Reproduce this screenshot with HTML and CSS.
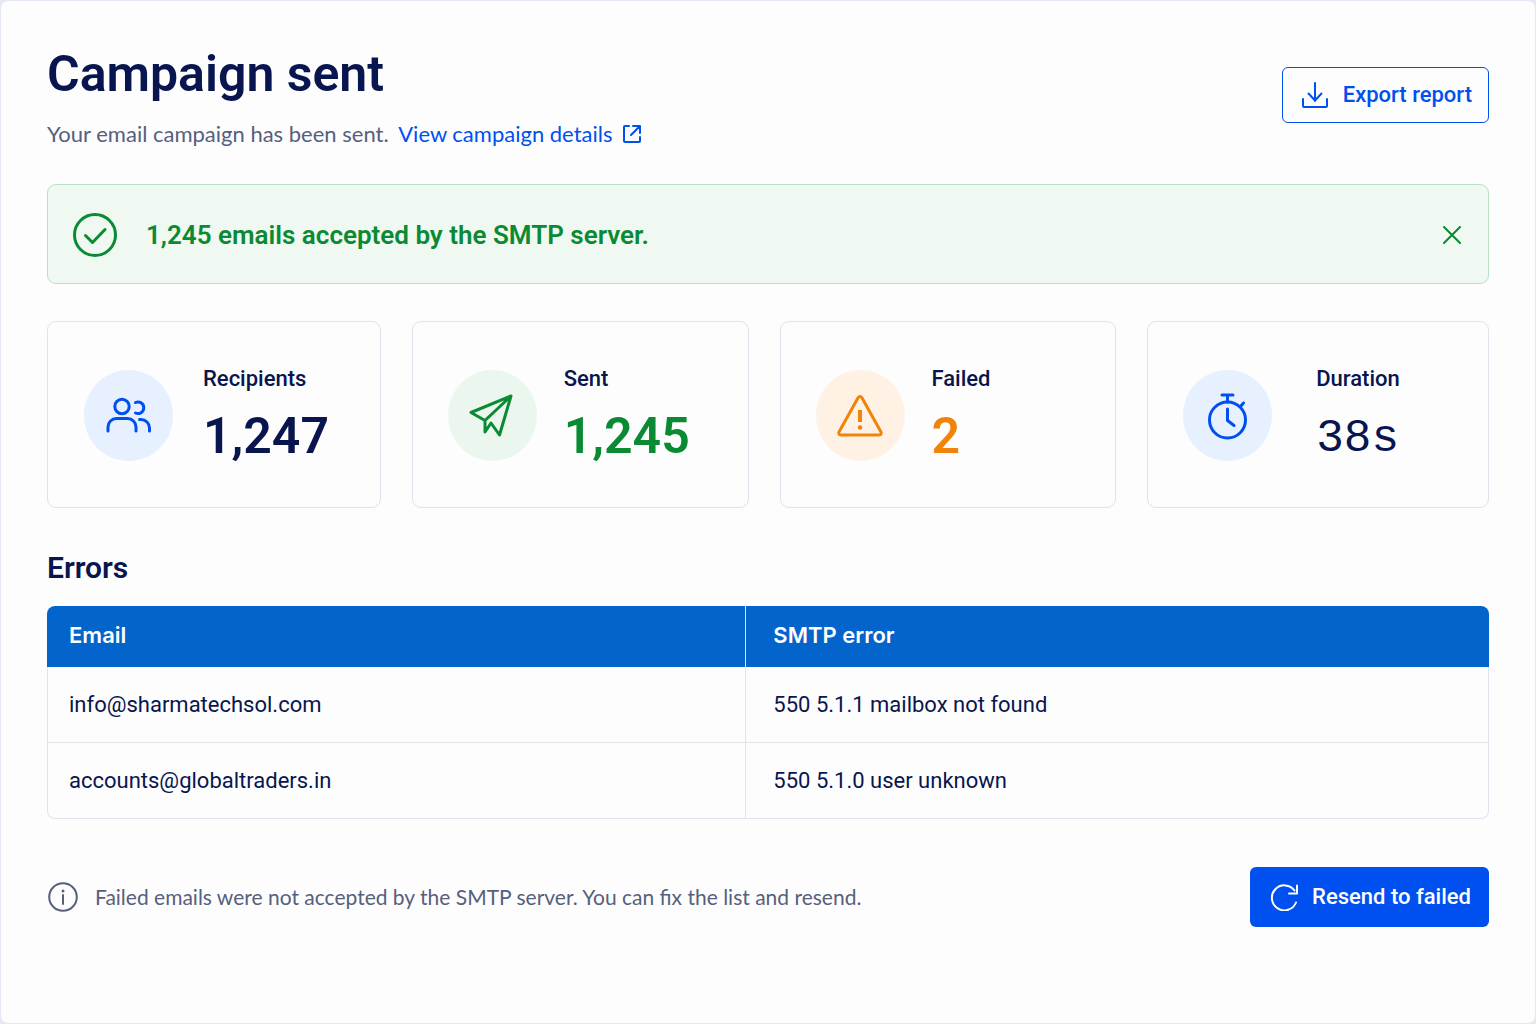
FILE: index.html
```html
<!DOCTYPE html>
<html lang="en">
<head>
<meta charset="utf-8">
<meta name="viewport" content="width=device-width, initial-scale=1">
<title>Campaign sent</title>
<link rel="stylesheet" href="styles.css">
</head>
<body>
<main class="page">
  <header class="header">
    <div>
      <h1 class="title">Campaign sent</h1>
      <p class="subtitle">Your email campaign has been sent.
        <a class="link" href="#details">View campaign details<svg class="link-icon" width="20" height="20" viewBox="0 0 20 20" aria-hidden="true"><path d="M7 2H3a1 1 0 0 0-1 1v14a1 1 0 0 0 1 1h14a1 1 0 0 0 1-1v-4M11 2h7v7M18 2L9 11"/></svg></a>
      </p>
    </div>
    <button class="button button-outline" type="button">
      <svg width="28" height="28" viewBox="0 0 28 28" aria-hidden="true"><path d="M14 2v18M7.500 12.500l6.500 7 6.500-7M2 18v7a1 1 0 0 0 1 1h22a1 1 0 0 0 1-1v-7"/></svg>
      Export report
    </button>
  </header>

  <section class="alert" role="status">
    <svg class="alert-icon" width="46" height="46" viewBox="0 0 46 46" aria-hidden="true"><circle cx="23" cy="23" r="20.500"/><path d="M13.500 23.500l7 7L33 17.500"/></svg>
    <p class="alert-text">1,245 emails accepted by the SMTP server.</p>
    <button class="close" type="button" aria-label="Dismiss"><svg width="18" height="18" viewBox="0 0 18 18" aria-hidden="true"><path d="M1 1l16 16M17 1L1 17"/></svg></button>
  </section>

  <section class="stats" aria-label="Summary">
    <article class="card card-first">
      <div class="badge badge-blue"><svg width="48" height="48" viewBox="0 0 48 48" aria-hidden="true"><circle cx="17" cy="14.500" r="7.200"/><path d="M3 39v-4a8.500 8.500 0 0 1 8.500-8.500h11a8.500 8.500 0 0 1 8.500 8.500v4M30.500 10.500a5.800 5.800 0 1 1 0 10.500M34.500 27.500h1.500a8.500 8.500 0 0 1 8.500 8.500V39"/></svg></div>
      <div><h2 class="label">Recipients</h2><p class="value">1,247</p></div>
    </article>
    <article class="card">
      <div class="badge badge-green"><svg width="48" height="48" viewBox="0 0 48 48" aria-hidden="true"><path d="M43 4L3 20.500l14 8L43 4L31.500 43l-8.500-12-6 9V28.500"/></svg></div>
      <div><h2 class="label">Sent</h2><p class="value value-green">1,245</p></div>
    </article>
    <article class="card">
      <div class="badge badge-orange"><svg width="48" height="48" viewBox="0 0 48 48" aria-hidden="true"><path d="M22.200 5.500a2.100 2.100 0 0 1 3.600 0l19.200 34.500a2 2 0 0 1-1.800 3H4.800a2 2 0 0 1-1.800-3z"/><path class="thick" d="M24 18v12"/><circle class="dot" cx="24" cy="35.500" r="2.300"/></svg></div>
      <div><h2 class="label">Failed</h2><p class="value value-orange">2</p></div>
    </article>
    <article class="card card-wide">
      <div class="badge badge-blue"><svg width="48" height="48" viewBox="0 0 48 48" aria-hidden="true"><circle cx="23.500" cy="28" r="18"/><path d="M23.500 10V3M18 3h11M36.500 14.500l3-3.500M23.500 17v11.500l6.500 5"/></svg></div>
      <div><h2 class="label">Duration</h2><p class="value value-mono">38s</p></div>
    </article>
  </section>

  <section>
    <h2 class="section-title" id="errors-title">Errors</h2>
    <table class="table" aria-labelledby="errors-title">
      <thead><tr><th scope="col">Email</th><th scope="col">SMTP error</th></tr></thead>
      <tbody>
        <tr><td>info@sharmatechsol.com</td><td>550 5.1.1 mailbox not found</td></tr>
        <tr><td>accounts@globaltraders.in</td><td>550 5.1.0 user unknown</td></tr>
      </tbody>
    </table>
  </section>

  <footer class="footer">
    <p class="note"><svg width="32" height="32" viewBox="0 0 32 32" aria-hidden="true"><circle cx="16" cy="16" r="13.800"/><path d="M16 14v9"/><circle class="dot" cx="16" cy="10" r="1.500"/></svg>Failed emails were not accepted by the SMTP server. You can fix the list and resend.</p>
    <button class="button button-solid" type="button">
      <svg width="28" height="28" viewBox="0 0 28 28" aria-hidden="true"><path d="M26 19.500A12.500 12.500 0 1 1 24.500 7.500M27 2.500v8h-8"/></svg>
      Resend to failed
    </button>
  </footer>
</main>
</body>
</html>
```
FILE: styles.css
```css
:root {
  --navy: #08154f;
  --slate: #56607d;
  --blue: #0050f0;
  --green: #0a8a33;
  --orange: #f08309;
  --line: #dfe3ec;
}

* { box-sizing: border-box; }

body {
  margin: 0;
  background: #e3e8f2;
  color: var(--navy);
  font: 22px/32px Roboto, "Liberation Sans", sans-serif;
}

h1, h2, p { margin: 0; }

svg {
  flex: none;
  display: block;
  fill: none;
  stroke: currentColor;
  stroke-width: 2;
  stroke-linecap: round;
  stroke-linejoin: round;
}

.dot { fill: currentColor; stroke: none; }
.thick { stroke-width: 4; stroke-linecap: butt; }

.page {
  min-height: 100vh;
  padding: 39px 46px 48px 46px;
  border: 1px solid #e3e8f2;
  border-radius: 8px;
  background: #fdfdfe;
}

.header {
  display: flex;
  justify-content: space-between;
  align-items: center;
  margin-bottom: 34px;
}

.title { font-size: 50px; line-height: 68px; font-weight: 600; }
.subtitle, .note { font-family: Lato, "Liberation Sans", sans-serif; color: var(--slate); }
.subtitle { margin-top: 10px; }
.link { margin-left: 4px; color: var(--blue); text-decoration: none; }
.link-icon { display: inline-block; margin-left: 10px; vertical-align: -2px; }

.button {
  display: flex;
  align-items: center;
  gap: 14px;
  border-radius: 6px;
  font: inherit;
  font-weight: 500;
  cursor: pointer;
}

.button-outline {
  height: 56px;
  padding: 0 16px 0 18px;
  border: 1px solid var(--blue);
  background: transparent;
  color: var(--blue);
}

.button-solid {
  height: 60px;
  padding: 0 18px 0 20px;
  border: 0;
  background: var(--blue);
  color: #fff;
}

.alert {
  display: flex;
  align-items: center;
  gap: 28px;
  height: 100px;
  margin-bottom: 37px;
  padding: 2px 22px 0 24px;
  border: 1px solid #b9dfc6;
  border-radius: 9px;
  background: #f0f8f2;
  color: var(--green);
}

.alert-icon { stroke-width: 3; }
.alert-text { flex: 1; font-size: 26px; font-weight: 600; }

.close {
  padding: 5px;
  border: 0;
  background: none;
  color: inherit;
  cursor: pointer;
}

.stats {
  display: grid;
  grid-template-columns: 334fr 337fr 337fr 342fr;
  gap: 31px;
  margin-bottom: 42px;
}

.card {
  display: flex;
  align-items: center;
  gap: 27px;
  height: 187px;
  padding: 2px 35px 0;
  border: 1px solid var(--line);
  border-radius: 9px;
}

.card-first { padding-left: 36px; gap: 30px; }
.card-wide { gap: 44px; }

.badge {
  display: grid;
  flex: none;
  place-items: center;
  width: 89px;
  height: 91px;
  border-radius: 50%;
}

.badge svg { stroke-width: 3; }
.badge-blue { background: #e6f0fe; color: var(--blue); }
.badge-green { background: #ebf7ee; color: var(--green); }
.badge-orange { background: #fff2e4; color: var(--orange); }

.label { font-size: 22px; line-height: 32px; font-weight: 500; }
.value { margin-top: 8px; font-size: 50px; line-height: 66px; font-weight: 600; }
.value-green { color: var(--green); }
.value-orange { color: var(--orange); }
.value-mono {
  margin-top: 14px;
  font-family: "Liberation Mono", monospace;
  font-size: 46px;
  line-height: 60px;
  font-weight: 400;
}

.section-title {
  margin-bottom: 20px;
  font-size: 30px;
  line-height: 36px;
  font-weight: 600;
}

.table {
  width: 100%;
  border-collapse: separate;
  border-spacing: 0;
  table-layout: fixed;
  text-align: left;
}

.table th {
  height: 61px;
  padding: 0 27px 3px;
  background: #0364cb;
  color: #fff;
  font-family: Inter, "Liberation Sans", sans-serif;
  font-weight: 600;
}

.table td {
  height: 76px;
  padding: 1px 27px 0;
  border-right: 1px solid var(--line);
  border-bottom: 1px solid var(--line);
}

.table th:first-child, .table td:first-child {
  width: 48.500%;
  padding-left: 22px;
  border-right: 1px solid var(--line);
}
.table td:first-child { padding-left: 21px; border-left: 1px solid var(--line); }
.table th:first-child { border-top-left-radius: 8px; }
.table th:last-child { border-top-right-radius: 8px; }
.table tr:last-child td:first-child { border-bottom-left-radius: 8px; }
.table tr:last-child td:last-child { border-bottom-right-radius: 8px; }
.table thead th:first-child, .table thead th:last-child { border-bottom: 0; }

.footer {
  display: flex;
  justify-content: space-between;
  align-items: center;
  margin-top: 48px;
}

.note {
  display: flex;
  align-items: center;
  gap: 16px;
  font-size: 21px;
}
```
